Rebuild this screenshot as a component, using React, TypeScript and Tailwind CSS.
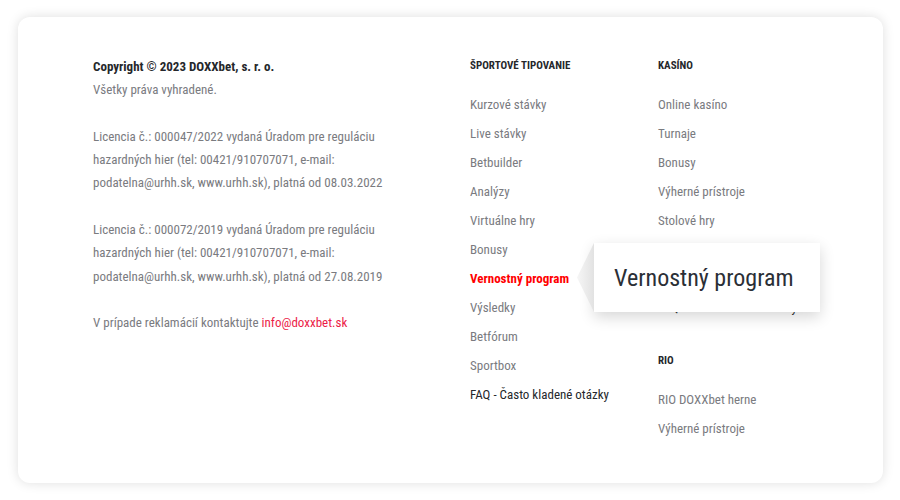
import React from 'react';

type LinkItem = { label: string; dark?: boolean; active?: boolean };

const sportLinks: LinkItem[] = [
  { label: 'Kurzové stávky' },
  { label: 'Live stávky' },
  { label: 'Betbuilder' },
  { label: 'Analýzy' },
  { label: 'Virtuálne hry' },
  { label: 'Bonusy' },
  { label: 'Vernostný program', active: true },
  { label: 'Výsledky' },
  { label: 'Betfórum' },
  { label: 'Sportbox' },
  { label: 'FAQ - Často kladené otázky', dark: true },
];

const casinoLinks: LinkItem[] = [
  { label: 'Online kasíno' },
  { label: 'Turnaje' },
  { label: 'Bonusy' },
  { label: 'Výherné prístroje' },
  { label: 'Stolové hry' },
  { label: 'Live kasíno' },
  { label: 'Jackpoty' },
  { label: 'FAQ - Často kladené otázky', dark: true },
];

const rioLinks: LinkItem[] = [{ label: 'RIO DOXXbet herne' }, { label: 'Výherné prístroje' }];

// hover bubble shown next to the active link
const Tooltip: React.FC<{ text: string }> = ({ text }) => (
  <div className="absolute left-[107px] top-[-21px] flex items-stretch z-10">
    <div className="w-[17px] h-[69px] bg-linear-to-r from-[#f6f6f6] to-[#e2e2e2] [clip-path:polygon(100%_0,0_50%,100%_100%)]" />
    <div className="w-[226px] h-[69px] bg-white shadow-[0_5px_14px_rgba(0,0,0,0.16)] flex items-center pl-5 text-[24px] text-[#2b2f36] whitespace-nowrap">
      {text}
    </div>
  </div>
);

const LinkList: React.FC<{ items: LinkItem[] }> = ({ items }) => (
  <ul className="mt-[15px] flex flex-col">
    {items.map((item, i) => (
      <li key={i} className="relative h-[29px] flex items-center whitespace-nowrap">
        {item.active ? (
          <>
            <a className="text-[#ff0000] font-bold text-[13px]">{item.label}</a>
            <Tooltip text={item.label} />
          </>
        ) : (
          <a className={item.dark ? 'text-[#25272b]' : 'text-[#7a7b7f]'}>{item.label}</a>
        )}
      </li>
    ))}
  </ul>
);

const Heading: React.FC<{ children: React.ReactNode }> = ({ children }) => (
  <h4 className="h-5 flex items-center pt-[2px] text-[11px] font-bold uppercase text-[#25272b]">{children}</h4>
);

export default function App() {
  return (
    <div className="w-[900px] h-[500px] bg-white pt-[17px] pl-[18px] font-['Roboto_Condensed',sans-serif] text-[13px]">
      <div className="w-[865px] h-[466px] bg-white rounded-[12px] shadow-[0_0_12px_rgba(0,0,0,0.13)] flex pt-[38px] pl-[75px]">
        <div className="w-[377px] leading-[23.3px] text-[#7a7b7f]">
          <p className="font-bold text-[#25272b]">Copyright © 2023 DOXXbet, s. r. o.</p>
          <p>Všetky práva vyhradené.</p>
          <br />
          <p>
            Licencia č.: 000047/2022 vydaná Úradom pre reguláciu
            <br />
            hazardných hier (tel: 00421/910707071, e-mail:
            <br />
            podatelna@urhh.sk, www.urhh.sk), platná od 08.03.2022
          </p>
          <br />
          <p>
            Licencia č.: 000072/2019 vydaná Úradom pre reguláciu
            <br />
            hazardných hier (tel: 00421/910707071, e-mail:
            <br />
            podatelna@urhh.sk, www.urhh.sk), platná od 27.08.2019
          </p>
          <br />
          <p>
            V prípade reklamácií kontaktujte <a className="text-[#ec1c47]">info@doxxbet.sk</a>
          </p>
        </div>
        <div className="w-[188px]">
          <Heading>Športové tipovanie</Heading>
          <LinkList items={sportLinks} />
        </div>
        <div className="flex-1">
          <Heading>Kasíno</Heading>
          <LinkList items={casinoLinks} />
          <div className="mt-[28px]">
            <Heading>RIO</Heading>
            <LinkList items={rioLinks} />
          </div>
        </div>
      </div>
    </div>
  );
}
